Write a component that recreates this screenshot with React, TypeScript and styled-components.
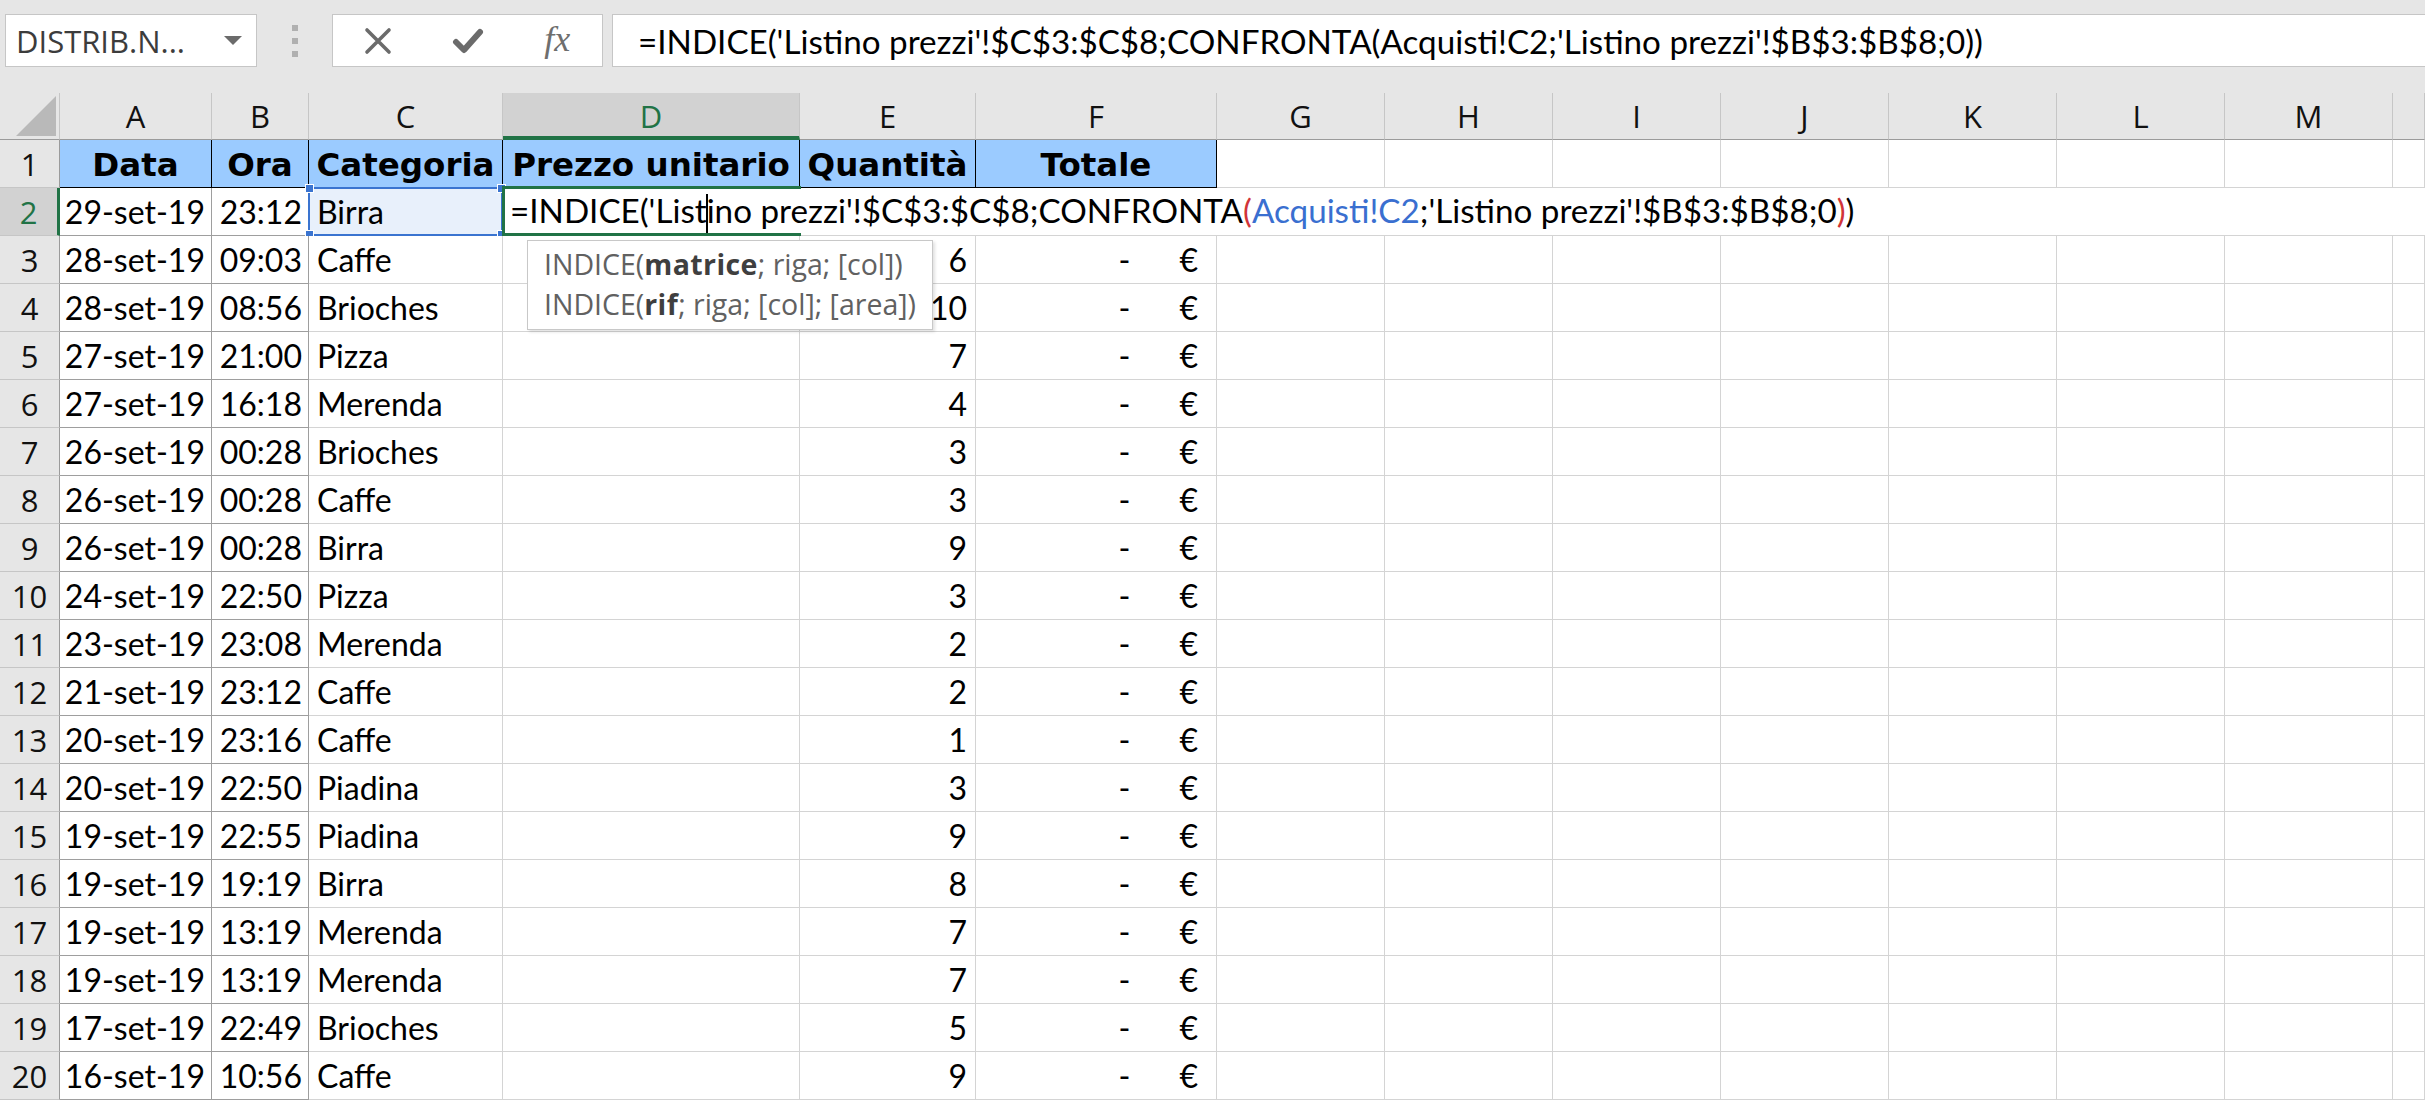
import styled, { createGlobalStyle } from "styled-components";

const GlobalStyle = createGlobalStyle`
  html, body {
    margin: 0;
    padding: 0;
    background: #ffffff;
    overflow: hidden;
  }
`;

const COLS = "60px 152px 97px 194px 297px 176px 241px repeat(7, 168px) 1fr";
const LETTERS = ["A", "B", "C", "D", "E", "F", "G", "H", "I", "J", "K", "L", "M", ""];

const rows = [
  ["28-set-19", "09:03", "Caffe", "6"],
  ["28-set-19", "08:56", "Brioches", "10"],
  ["27-set-19", "21:00", "Pizza", "7"],
  ["27-set-19", "16:18", "Merenda", "4"],
  ["26-set-19", "00:28", "Brioches", "3"],
  ["26-set-19", "00:28", "Caffe", "3"],
  ["26-set-19", "00:28", "Birra", "9"],
  ["24-set-19", "22:50", "Pizza", "3"],
  ["23-set-19", "23:08", "Merenda", "2"],
  ["21-set-19", "23:12", "Caffe", "2"],
  ["20-set-19", "23:16", "Caffe", "1"],
  ["20-set-19", "22:50", "Piadina", "3"],
  ["19-set-19", "22:55", "Piadina", "9"],
  ["19-set-19", "19:19", "Birra", "8"],
  ["19-set-19", "13:19", "Merenda", "7"],
  ["19-set-19", "13:19", "Merenda", "7"],
  ["17-set-19", "22:49", "Brioches", "5"],
  ["16-set-19", "10:56", "Caffe", "9"],
];

const headers = ["Data", "Ora", "Categoria", "Prezzo unitario", "Quantità", "Totale"];

const Page = styled.div`
  width: 2425px;
  height: 1100px;
  overflow: hidden;
  background: #fff;
`;

const Toolbar = styled.div`
  height: 93px;
  box-sizing: border-box;
  padding-top: 14px;
  background: #e6e6e6;
  display: flex;
  align-items: flex-start;
`;

const Box = styled.div`
  height: 53px;
  box-sizing: border-box;
  border: 1px solid #c6c6c6;
  background: #fff;
  display: flex;
  align-items: center;
`;

const NameBox = styled(Box)`
  margin-left: 5px;
  width: 252px;
  padding: 0 14px 0 10px;
  justify-content: space-between;
  font-family: "Open Sans", sans-serif;
  font-size: 31px;
  color: #3c3c3c;
`;

const Caret = styled.span`
  width: 0;
  height: 0;
  border-left: 9px solid transparent;
  border-right: 9px solid transparent;
  border-top: 9px solid #6b6b6b;
`;

const Grip = styled.div`
  width: 75px;
  height: 53px;
  display: flex;
  flex-direction: column;
  align-items: center;
  justify-content: center;
  gap: 7px;
`;

const GripDot = styled.span`
  width: 6px;
  height: 6px;
  background: #b0b0b0;
`;

const ButtonBox = styled(Box)`
  width: 271px;
`;

const ToolButton = styled.div`
  width: 90px;
  height: 100%;
  display: flex;
  align-items: center;
  justify-content: center;
`;

const Fx = styled.span`
  font-family: "Liberation Serif", serif;
  font-style: italic;
  font-size: 36px;
  color: #6e6e6e;
  margin-top: -4px;
`;

const FormulaInput = styled(Box)`
  flex: 1;
  margin-left: 9px;
  border-right: none;
  padding-left: 25px;
  font-family: Lato, sans-serif;
  font-size: 33.2px;
  color: #000;
  white-space: nowrap;
`;

const Sheet = styled.div`
  position: relative;
  display: grid;
  grid-template-columns: ${COLS};
  grid-template-rows: 47px repeat(20, 48px);
`;

const Corner = styled.div`
  background: #e6e6e6;
  border-right: 1px solid #c6c6c6;
  border-bottom: 1px solid #9b9b9b;
  box-sizing: border-box;
  position: relative;
  &::after {
    content: "";
    position: absolute;
    right: 3px;
    bottom: 3px;
    width: 0;
    height: 0;
    border-left: 40px solid transparent;
    border-bottom: 40px solid #b9b9b9;
  }
`;

const ColHead = styled.div<{ $sel?: boolean }>`
  box-sizing: border-box;
  background: ${(p) => (p.$sel ? "#d2d2d2" : "#e6e6e6")};
  border-right: 1px solid #c6c6c6;
  border-bottom: ${(p) => (p.$sel ? "4px solid #217346" : "1px solid #9b9b9b")};
  display: flex;
  align-items: center;
  justify-content: center;
  font-family: "Open Sans", sans-serif;
  font-size: 31px;
  color: ${(p) => (p.$sel ? "#217346" : "#111")};
  padding-top: ${(p) => (p.$sel ? "3px" : "0")};
`;

const RowHead = styled.div<{ $sel?: boolean }>`
  box-sizing: border-box;
  background: ${(p) => (p.$sel ? "#d2d2d2" : "#e6e6e6")};
  border-right: ${(p) => (p.$sel ? "3px solid #217346" : "1px solid #9b9b9b")};
  border-bottom: 1px solid #c6c6c6;
  display: flex;
  align-items: center;
  justify-content: center;
  font-family: "Open Sans", sans-serif;
  font-size: 31px;
  color: ${(p) => (p.$sel ? "#217346" : "#111")};
`;

type Tone = "plain" | "framed" | "head" | "ref";

const Cell = styled.div<{ $align?: "left" | "right" | "center"; $tone?: Tone }>`
  position: relative;
  box-sizing: border-box;
  min-width: 0;
  overflow: visible;
  white-space: nowrap;
  font-family: Lato, sans-serif;
  font-size: 32px;
  line-height: 47px;
  color: #000;
  display: flex;
  justify-content: ${(p) =>
    p.$align === "right" ? "flex-end" : p.$align === "center" ? "center" : "flex-start"};
  padding: ${(p) => (p.$align === "right" ? "0 6px 0 0" : p.$align === "center" ? "0" : "0 0 0 8px")};
  background: ${(p) => (p.$tone === "head" ? "#9bcbff" : p.$tone === "ref" ? "#e8f0fb" : "#fff")};
  border-right: 1px solid
    ${(p) => (p.$tone === "head" ? "#000" : p.$tone === "framed" ? "#9e9e9e" : "#d4d4d4")};
  border-bottom: 1px solid
    ${(p) => (p.$tone === "head" ? "#000" : p.$tone === "framed" ? "#9e9e9e" : "#d4d4d4")};
`;

const HeadText = styled.span`
  font-family: "DejaVu Sans", sans-serif;
  font-weight: 700;
  font-size: 32.5px;
  line-height: 47px;
  padding-top: 2px;
`;

const Qty = styled(Cell)`
  padding-right: 8px;
`;

const Money = styled(Cell)`
  padding-right: 18px;
`;

const Dash = styled.span`
  margin-right: 49px;
`;

const RefFrame = styled.div`
  position: absolute;
  top: -1px;
  left: -1px;
  right: -1px;
  bottom: -1px;
  border: 2px solid #3a74d0;
  pointer-events: none;
`;

const Handle = styled.span<{ $top: boolean; $left: boolean }>`
  position: absolute;
  width: 7px;
  height: 7px;
  background: #3a74d0;
  border: 1px solid #fff;
  ${(p) => (p.$top ? "top: -5px;" : "bottom: -5px;")}
  ${(p) => (p.$left ? "left: -5px;" : "right: -5px;")}
`;

const EditCell = styled.div`
  grid-column: 5 / -1;
  position: relative;
  box-sizing: border-box;
  background: #fff;
  border-bottom: 1px solid #d4d4d4;
  padding-left: 7px;
  font-family: Lato, sans-serif;
  font-size: 33.2px;
  line-height: 47px;
  white-space: nowrap;
  color: #000;
  display: flex;
  align-items: center;
`;

const ActiveFrame = styled.div`
  position: absolute;
  top: -2px;
  left: -1px;
  width: 299px;
  height: 50px;
  box-sizing: border-box;
  border: 3px solid #217346;
  border-right: none;
  pointer-events: none;
`;

const TextCaret = styled.span`
  display: inline-block;
  width: 0;
  height: 42px;
  border-left: 2px solid #000;
  margin: 0 -1px;
  vertical-align: middle;
`;

const Tok = styled.span<{ $c: string }>`
  color: ${(p) => p.$c};
`;

const Tooltip = styled.div`
  position: absolute;
  left: 527px;
  top: 147px;
  width: 406px;
  height: 90px;
  box-sizing: border-box;
  background: #fff;
  border: 1px solid #c8c8c8;
  box-shadow: 2px 2px 3px rgba(0, 0, 0, 0.12);
  padding: 3px 0 0 16px;
  font-family: "Open Sans", sans-serif;
  font-size: 28.5px;
  line-height: 40px;
  color: #616161;
  white-space: nowrap;
`;

const Strong = styled.b`
  color: #3f3f3f;
  font-weight: 700;
  letter-spacing: 0.4px;
`;

const CrossIcon = () => (
  <svg width="30" height="28" viewBox="0 0 30 28">
    <path d="M4 3 L26 25 M26 3 L4 25" stroke="#6b6b6b" strokeWidth="3.6" strokeLinecap="round" />
  </svg>
);

const CheckIcon = () => (
  <svg width="32" height="28" viewBox="0 0 32 28">
    <path d="M4 15 L12 23 L28 5" stroke="#6b6b6b" strokeWidth="6" fill="none" strokeLinecap="round" strokeLinejoin="round" />
  </svg>
);

const Formula = ({ caret }: { caret?: boolean }) => (
  <>
    <Tok $c="#000">=INDICE('List</Tok>
    {caret && <TextCaret />}
    <Tok $c="#000">ino prezzi'!$C$3:$C$8;CONFRONTA</Tok>
    <Tok $c={caret ? "#d13438" : "#000"}>(</Tok>
    <Tok $c={caret ? "#3a6fd0" : "#000"}>Acquisti!C2</Tok>
    <Tok $c="#000">;'Listino prezzi'!$B$3:$B$8;0</Tok>
    <Tok $c={caret ? "#d13438" : "#000"}>)</Tok>
    <Tok $c="#000">)</Tok>
  </>
);

const emptyCols = Array.from({ length: 8 });

const App = () => {
  return (
    <Page>
      <GlobalStyle />
      <Toolbar>
        <NameBox>
          <span>DISTRIB.N...</span>
          <Caret />
        </NameBox>
        <Grip>
          <GripDot />
          <GripDot />
          <GripDot />
        </Grip>
        <ButtonBox>
          <ToolButton>
            <CrossIcon />
          </ToolButton>
          <ToolButton>
            <CheckIcon />
          </ToolButton>
          <ToolButton>
            <Fx>fx</Fx>
          </ToolButton>
        </ButtonBox>
        <FormulaInput>
          <span>=INDICE('Listino prezzi'!$C$3:$C$8;CONFRONTA(Acquisti!C2;'Listino prezzi'!$B$3:$B$8;0))</span>
        </FormulaInput>
      </Toolbar>

      <Sheet>
        <Corner />
        {LETTERS.map((l, i) => (
          <ColHead key={i} $sel={l === "D"}>
            {l}
          </ColHead>
        ))}

        {/* row 1: headers */}
        <RowHead>1</RowHead>
        {headers.map((h) => (
          <Cell key={h} $tone="head" $align="center">
            <HeadText>{h}</HeadText>
          </Cell>
        ))}
        {emptyCols.map((_, i) => (
          <Cell key={i} />
        ))}

        {/* row 2: editing */}
        <RowHead $sel>2</RowHead>
        <Cell $tone="framed" $align="right">
          29-set-19
        </Cell>
        <Cell $tone="framed" $align="right">
          23:12
        </Cell>
        <Cell $tone="ref">
          Birra
          <RefFrame>
            <Handle $top $left />
            <Handle $top $left={false} />
            <Handle $top={false} $left />
            <Handle $top={false} $left={false} />
          </RefFrame>
        </Cell>
        <EditCell>
          <ActiveFrame />
          <span>
            <Formula caret />
          </span>
        </EditCell>

        {rows.map((r, i) => (
          <Row key={i} n={i + 3} data={r} />
        ))}

        <Tooltip>
          <div>
            INDICE(<Strong>matrice</Strong>; riga; [col])
          </div>
          <div>
            INDICE(<Strong>rif</Strong>; riga; [col]; [area])
          </div>
        </Tooltip>
      </Sheet>
    </Page>
  );
};

const Row = ({ n, data }: { n: number; data: string[] }) => (
  <>
    <RowHead>{n}</RowHead>
    <Cell $tone="framed" $align="right">
      {data[0]}
    </Cell>
    <Cell $tone="framed" $align="right">
      {data[1]}
    </Cell>
    <Cell>{data[2]}</Cell>
    <Cell />
    <Qty $align="right">{data[3]}</Qty>
    <Money $align="right">
      <Dash>-</Dash>
      <span>€</span>
    </Money>
    {emptyCols.map((_, i) => (
      <Cell key={i} />
    ))}
  </>
);

export default App;
